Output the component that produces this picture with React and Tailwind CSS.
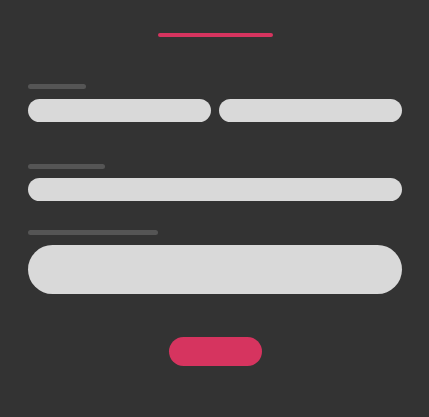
export default function App() {
  return (
    <div className="min-h-[417px] w-full bg-[#333333] pl-[28px] pr-[27px] pt-[33px] font-['Liberation_Sans',sans-serif]">
      {/* title bar */}
      <div className="mx-auto h-[4px] w-[115px] rounded-full bg-[#d6345f]" />

      {/* name row */}
      <div className="mt-[47px] h-[5px] w-[58px] rounded-full bg-[#555555]" />
      <div className="mt-[10px] flex gap-[8px]">
        <div className="h-[23px] flex-1 rounded-full bg-[#d9d9d9]" />
        <div className="h-[23px] flex-1 rounded-full bg-[#d9d9d9]" />
      </div>

      {/* email */}
      <div className="mt-[42px] h-[5px] w-[77px] rounded-full bg-[#555555]" />
      <div className="mt-[9px] h-[23px] rounded-full bg-[#d9d9d9]" />

      {/* message */}
      <div className="mt-[29px] h-[5px] w-[130px] rounded-full bg-[#555555]" />
      <div className="mt-[10px] h-[49px] rounded-[25px] bg-[#d9d9d9]" />

      {/* submit */}
      <div className="mt-[43px] flex justify-center">
        <button className="h-[29px] w-[93px] rounded-full bg-[#d6345f]" />
      </div>
    </div>
  );
}
